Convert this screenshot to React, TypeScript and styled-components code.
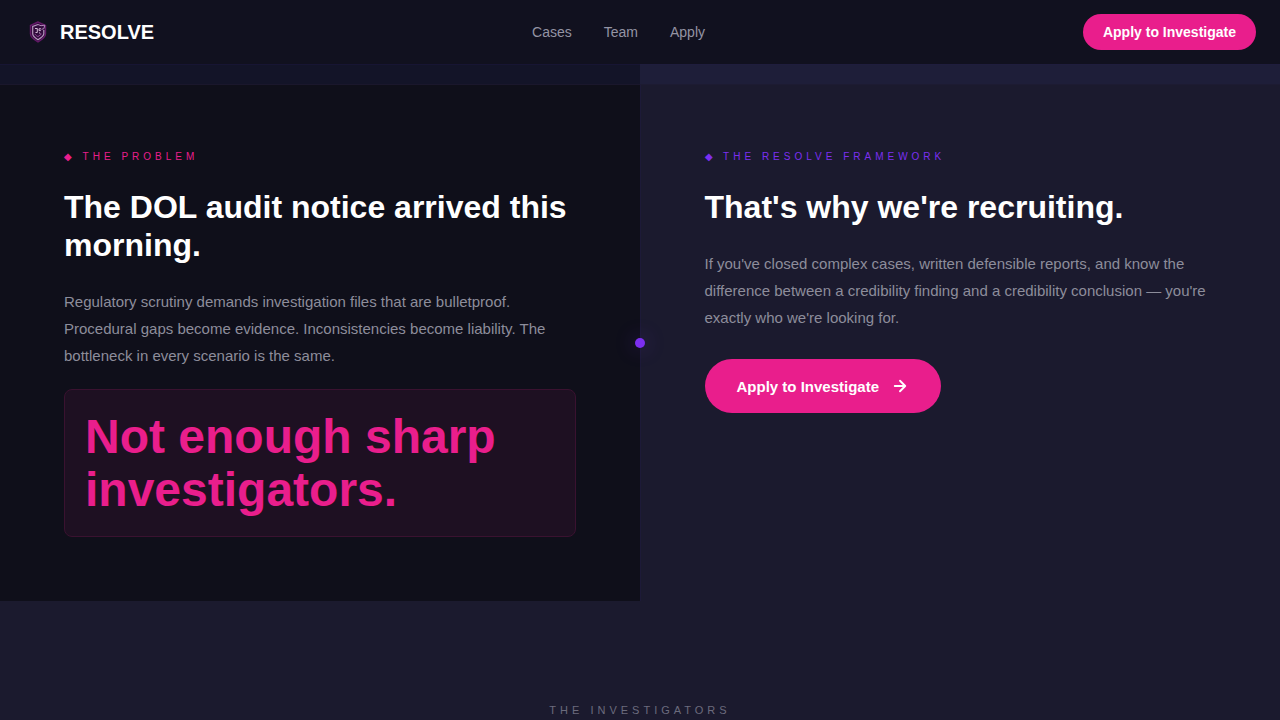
import React from "react";
import styled, { createGlobalStyle } from "styled-components";

const pink = "#e91e8c";
const violet = "#7c2ff0";
const night = "#0f0f1a";
const indigo = "#1b1a2e";

const GlobalStyle = createGlobalStyle`
  *, *::before, *::after { box-sizing: border-box; }
  body {
    margin: 0;
    background: ${indigo};
    color: #fff;
    font-family: "Liberation Sans", Arial, sans-serif;
    overflow-x: hidden;
    scrollbar-width: none;
  }
  h1, h2, p { margin: 0; }
  a { text-decoration: none; color: inherit; }
`;

const Nav = styled.nav`
  display: flex;
  align-items: center;
  justify-content: space-between;
  height: 64px;
  padding: 0 24px;
  background: #11111f;
`;

const Brand = styled.a`
  display: flex;
  align-items: center;
  gap: 8px;
  font-size: 20px;
  line-height: 28px;
  font-weight: 700;
`;

const Links = styled.div`
  display: flex;
  gap: 32px;
`;

const NavLink = styled.a`
  font-size: 14px;
  line-height: 20px;
  color: #9494a4;
`;

const PillButton = styled.button<{ $large?: boolean }>`
  display: inline-flex;
  align-items: center;
  gap: 12px;
  height: ${(p) => (p.$large ? 54 : 36)}px;
  padding: 0 ${(p) => (p.$large ? 32 : 20)}px;
  border: 0;
  border-radius: 28px;
  background: ${pink};
  color: #fff;
  font-family: inherit;
  font-size: ${(p) => (p.$large ? 15 : 14)}px;
  font-weight: 700;
  cursor: pointer;
`;

const Ribbon = styled.div`
  display: grid;
  grid-template-columns: 1fr 1fr;
  height: 21px;
`;

const RibbonHalf = styled.div<{ $light?: boolean }>`
  background: ${(p) => (p.$light ? "#1e1e39" : "#131428")};
  border-top: 1px solid ${(p) => (p.$light ? "#1f1d3d" : "#171533")};
  border-bottom: 1px solid ${(p) => (p.$light ? "#1d1b32" : "#1a172c")};
`;

const Split = styled.section`
  position: relative;
  display: grid;
  grid-template-columns: 1fr 1px 1fr;
`;

const Divider = styled.div`
  background: #1d1a38;
`;

const Dot = styled.span`
  position: absolute;
  top: 50%;
  left: 50%;
  width: 10px;
  height: 10px;
  border-radius: 50%;
  transform: translate(-50%, -50%);
  background: ${violet};
  box-shadow: 0 0 20px rgba(124, 58, 237, 0.4);
`;

const Panel = styled.div<{ $dark?: boolean }>`
  padding: 64px;
  background: ${(p) => (p.$dark ? night : indigo)};
`;

const Eyebrow = styled.p<{ $color: string }>`
  margin-bottom: 24px;
  font-size: 10px;
  line-height: 15px;
  letter-spacing: 4px;
  color: ${(p) => p.$color};
`;

const Title = styled.h2`
  margin-bottom: 24px;
  font-size: 32px;
  line-height: 38px;
  font-weight: 700;
`;

const Copy = styled.p`
  font-size: 15px;
  line-height: 27px;
  color: #8d8d9b;
`;

const Callout = styled.div`
  margin-top: 20px;
  padding: 20px;
  border: 1px solid #3a1230;
  border-radius: 8px;
  background: #1e1022;
  color: ${pink};
  font-size: 48px;
  line-height: 53px;
  font-weight: 700;
`;

const Action = styled.div`
  margin-top: 28px;
`;

const Investigators = styled.section`
  padding: 100px 24px 0;
  text-align: center;
`;

const SectionLabel = styled.p`
  font-size: 11px;
  line-height: 18px;
  letter-spacing: 4px;
  color: #6b6b7d;
`;

function ShieldLogo() {
  return (
    <svg width="28" height="28" viewBox="0 0 28 28" fill="none" aria-hidden="true">
      <path
        d="M14 4 6.500 7.500v8.500c0 3.200 3.500 5.600 7.500 8 4-2.400 7.500-4.800 7.500-8V7.500Z"
        fill="#320c3d"
        stroke="#641968"
        strokeWidth="1.400"
      />
      <path
        d="m14 6.500-5.300 2v7.300c0 2.300 2.600 4.300 5.300 6 2.700-1.700 5.800-3.700 5.800-6V12"
        stroke="#b596bd"
        strokeWidth="1.200"
      />
      <path d="m14 6.500 3 1.200 3.700-.5-.8 3.500-2.400.6" stroke="#b08bb9" />
      <path d="M11 10.500h2.300v4H11.500M17 10.800h-2v1.800h1.800M15 14.500l1.500 1.300" stroke="#d3b8d6" />
      <path d="M11 16.200c1 1.300 2 2 3 2.400l3.500-2.600" stroke="#93489a" />
    </svg>
  );
}

function Arrow() {
  return (
    <svg
      width="18"
      height="18"
      viewBox="0 0 24 24"
      fill="none"
      stroke="currentColor"
      strokeWidth="2.500"
      strokeLinecap="round"
      strokeLinejoin="round"
      aria-hidden="true"
    >
      <path d="M5 12h14M12 5l7 7-7 7" />
    </svg>
  );
}

export default function App() {
  return (
    <>
      <GlobalStyle />
      <Nav>
        <Brand href="#">
          <ShieldLogo />
          RESOLVE
        </Brand>
        <Links>
          <NavLink href="#cases">Cases</NavLink>
          <NavLink href="#team">Team</NavLink>
          <NavLink href="#apply">Apply</NavLink>
        </Links>
        <PillButton>Apply to Investigate</PillButton>
      </Nav>
      <Ribbon>
        <RibbonHalf />
        <RibbonHalf $light />
      </Ribbon>
      <main>
        <Split>
          <Panel $dark>
            <Eyebrow $color={pink}>◆ THE PROBLEM</Eyebrow>
            <Title>The DOL audit notice arrived this morning.</Title>
            <Copy>
              Regulatory scrutiny demands investigation files that are bulletproof. Procedural gaps
              become evidence. Inconsistencies become liability. The bottleneck in every scenario is
              the same.
            </Copy>
            <Callout>Not enough sharp investigators.</Callout>
          </Panel>
          <Divider />
          <Panel>
            <Eyebrow $color={violet}>◆ THE RESOLVE FRAMEWORK</Eyebrow>
            <Title>That's why we're recruiting.</Title>
            <Copy>
              If you've closed complex cases, written defensible reports, and know the difference
              between a credibility finding and a credibility conclusion — you're exactly who we're
              looking for.
            </Copy>
            <Action>
              <PillButton $large>
                Apply to Investigate
                <Arrow />
              </PillButton>
            </Action>
          </Panel>
          <Dot />
        </Split>
        <Investigators>
          <SectionLabel>THE INVESTIGATORS</SectionLabel>
        </Investigators>
      </main>
    </>
  );
}
